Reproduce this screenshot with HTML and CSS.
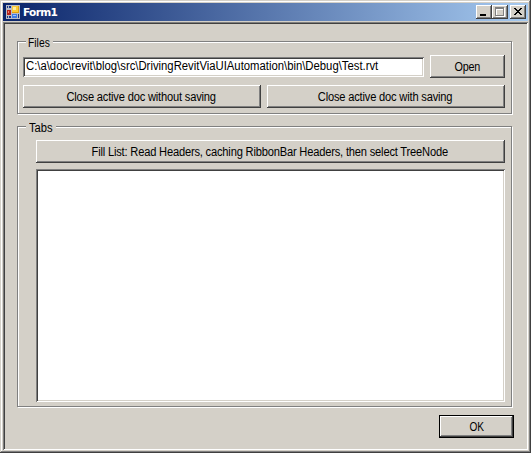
FILE: index.html
```html
<!DOCTYPE html>
<html lang="en">
<head>
<meta charset="utf-8">
<title>Form1</title>
<link rel="stylesheet" href="styles.css">
</head>
<body>
<div class="window">
  <header class="titlebar">
    <svg class="app-icon" width="14" height="14" viewBox="0 0 14 14" shape-rendering="crispEdges">
      <path fill="#b9bcc6" d="M0 0h14v14H0z"/>
      <path fill="#17368a" d="M1 1h1v2H1zM3 1h2v2H3zM1 11h1v2H1zM3 11h2v2H3z"/>
      <path fill="#e0a010" d="M6 1h7v7H6z"/>
      <path fill="#fbcb35" d="M6 1h6v6H6z"/>
      <path fill="#ffeb9c" d="M7 2h3v3H7z"/>
      <path fill="#b4231b" d="M1 5h4v5H1z"/>
      <path fill="#ef8273" d="M2 6h1v2H2z"/>
      <path fill="#3f7be4" d="M6 9h5v4H6z"/>
      <path fill="#9cc4ff" d="M7 10h3v1H7z"/>
      <path fill="#17368a" d="M12 9h1v4h-1z"/>
    </svg>
    <h1 class="title">Form1</h1>
    <div class="controls">
      <button class="ctl" aria-label="Minimize"><svg width="16" height="14" shape-rendering="crispEdges"><path d="M4 9h6v2H4z"/></svg></button>
      <button class="ctl" aria-label="Maximize"><svg width="16" height="14" shape-rendering="crispEdges"><path fill="#fff" d="M4 3h9v9H4zM5 5v6h7V5z" fill-rule="evenodd"/><path fill="#808080" d="M3 2h9v9H3zM4 4v6h7V4z" fill-rule="evenodd"/></svg></button>
      <button class="ctl close" aria-label="Close"><svg width="16" height="14" shape-rendering="crispEdges"><path d="M4 3h2v1h1v1h2V4h1V3h2v1h-1v1h-1v1H9v1h1v1h1v1h1v1h-2V9H9V8H7v1H6v1H4V9h1V8h1V7h1V6H6V5H5V4H4z"/></svg></button>
    </div>
  </header>
  <main class="client">
    <section class="group files">
      <h2 class="legend"><span class="t-files">Files</span></h2>
      <div class="row">
        <div class="field"><span class="t-path">C:\a\doc\revit\blog\src\DrivingRevitViaUIAutomation\bin\Debug\Test.rvt</span></div>
        <button class="btn open"><span class="t-short">Open</span></button>
      </div>
      <div class="row actions">
        <button class="btn"><span class="t-wide">Close active doc without saving</span></button>
        <button class="btn"><span class="t-wide">Close active doc with saving</span></button>
      </div>
    </section>
    <section class="group tabs">
      <h2 class="legend"><span class="t-tabs">Tabs</span></h2>
      <button class="btn"><span class="t-wide">Fill List: Read Headers, caching RibbonBar Headers, then select TreeNode</span></button>
      <div class="list"></div>
    </section>
    <footer class="footer"><button class="btn default"><span class="t-ok">OK</span></button></footer>
  </main>
</div>
</body>
</html>
```
FILE: styles.css
```css
* { box-sizing: border-box; }
body { margin: 0; background: #d4d0c8; overflow: hidden; }
button { margin: 0; padding: 0; border: 0; border-radius: 0; color: #000; }

.window {
  display: flex;
  flex-direction: column;
  width: 531px;
  height: 453px;
  padding: 3px;
  background: #d4d0c8;
  box-shadow: inset -1px -1px #404040, inset 1px 1px #d4d0c8,
    inset -2px -2px #808080, inset 2px 2px #fff;
  font: 12px/14px "Liberation Sans", Arial, sans-serif;
}
.titlebar {
  display: flex;
  height: 18px;
  padding: 2px 2px 0 3px;
  background: linear-gradient(to right, #0a246a, #a6caf0);
}
.app-icon { display: block; flex: none; }
.title {
  margin: 0 auto 0 3px;
  font: bold 11px/15px "DejaVu Sans", Tahoma, sans-serif;
  letter-spacing: -0.7px;
  color: #fff;
  transform: scaleX(0.96);
  transform-origin: left;
}
.controls { display: flex; }
.ctl {
  width: 16px;
  height: 14px;
  background: #d4d0c8;
  box-shadow: inset -1px -1px #404040, inset 1px 1px #fff, inset -2px -2px #808080;
}
.ctl svg { display: block; }
.close { margin-left: 2px; }

.client {
  flex: 1;
  margin-top: 1px;
  padding: 19px 15px 0 14px;
  box-shadow: inset 1px 1px #808080, inset -1px -1px #fff, inset 2px 2px #404040;
}
.group {
  width: 495px;
  border: 1px solid #808080;
  box-shadow: 1px 1px #fff, inset 1px 1px #fff;
}
.files { height: 73px; padding: 0 6px 0 5px; }
.tabs { height: 281px; margin-top: 12px; padding: 0 6px 0 18px; }
.legend {
  width: 27px;
  height: 14px;
  margin: -6px 0 0 3px;
  padding-left: 2px;
  background: #d4d0c8;
  font: inherit;
  white-space: nowrap;
}
.tabs .legend { width: 30px; margin-left: -10px; padding-left: 3px; }
.row { display: flex; justify-content: space-between; align-items: center; height: 23px; margin-top: 5px; }
.field {
  width: 401px;
  height: 20px;
  padding: 2px 3px;
  background: #fff;
  box-shadow: inset 1px 1px #808080, inset -1px -1px #fff,
    inset 2px 2px #404040, inset -2px -2px #d4d0c8;
}
.btn {
  display: flex;
  justify-content: center;
  align-items: center;
  width: 100%;
  height: 23px;
  background: #d4d0c8;
  font: inherit;
  white-space: nowrap;
  box-shadow: inset -1px -1px #404040, inset 1px 1px #fff, inset -2px -2px #808080;
}
.open { width: 75px; }
.actions { gap: 6px; margin-top: 7px; }
.tabs > .btn { margin-top: 5px; }
.list {
  height: 233px;
  margin-top: 6px;
  background: #fff;
  box-shadow: inset 1px 1px #808080, inset -1px -1px #fff,
    inset 2px 2px #404040, inset -2px -2px #d4d0c8;
}
.footer { display: flex; justify-content: flex-end; margin: 8px -1px 0 0; }
.default {
  width: 75px;
  border: 1px solid #000;
}

/* Condensed captions */
.btn span, .field span, .legend span { display: inline-block; }
.t-path { transform: scaleX(0.942); transform-origin: left; }
.t-wide { letter-spacing: -0.2px; transform: translateX(-0.5px) scaleX(0.927); }
.t-short { letter-spacing: -0.2px; transform: scaleX(0.9); }
.t-ok { transform: scaleX(0.84); }
.t-files { transform: scaleX(0.86); transform-origin: left; }
.t-tabs { transform: scaleX(0.93); transform-origin: left; }
```
